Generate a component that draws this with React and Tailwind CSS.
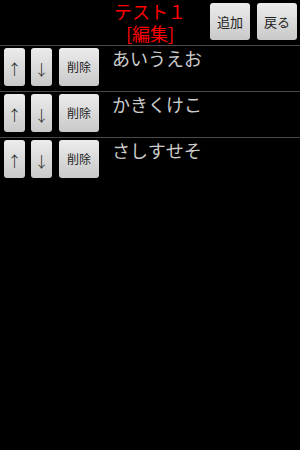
const items = ['あいうえお', 'かきくけこ', 'さしすせそ']

const font = { fontFamily: '"Noto Sans CJK JP", "DejaVu Sans", sans-serif' }

function Btn({ children, className = '' }) {
  return (
    <button
      className={`flex items-center justify-center rounded-[3px] bg-gradient-to-b from-[#ececec] to-[#c9c9c9] text-[#222] shadow-[0_1px_1px_rgba(0,0,0,0.6)] ${className}`}
    >
      {children}
    </button>
  )
}

export default function App() {
  return (
    <div className="w-[300px] h-[450px] bg-black overflow-hidden" style={font}>
      <div className="grid grid-cols-[89px_1fr_89px] h-[45px]">
        <div />
        <div className="flex flex-col items-center text-[#ff0000] text-[18px] leading-[21px] pt-[1px]">
          <span>テスト１</span>
          <span className="mt-[1px]">[編集]</span>
        </div>
        <div className="flex gap-[7px] pt-[3px] -ml-[1px]">
          <Btn className="w-[40px] h-[37px] text-[13px]">追加</Btn>
          <Btn className="w-[40px] h-[37px] text-[13px]">戻る</Btn>
        </div>
      </div>
      {items.map((item) => (
        <div key={item} className="flex border-t border-[#4a4a4a] h-[46px] pt-[2px] pl-[4px]">
          <Btn className="w-[21px] h-[38px] text-[15px] pt-[4px] font-light">↑</Btn>
          <Btn className="w-[21px] h-[38px] ml-[6px] text-[15px] pt-[4px] font-light">↓</Btn>
          <Btn className="w-[40px] h-[38px] ml-[7px] text-[12px]">削除</Btn>
          <span className="ml-[13px] text-[#cccccc] text-[18px] leading-[22px] -mt-[1px]">{item}</span>
        </div>
      ))}
    </div>
  )
}
